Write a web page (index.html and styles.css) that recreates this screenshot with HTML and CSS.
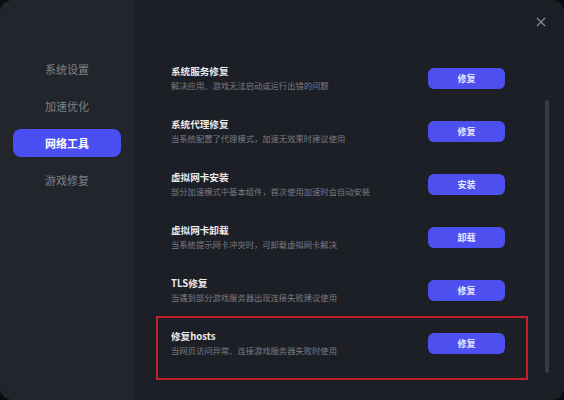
FILE: index.html
```html
<!DOCTYPE html>
<html lang="zh-CN">
<head>
<meta charset="utf-8">
<link rel="stylesheet" href="styles.css">
</head>
<body>
<div class="window">
  <aside class="sidebar">
    <div class="nav-item">系统设置</div>
    <div class="nav-item">加速优化</div>
    <div class="nav-item active">网络工具</div>
    <div class="nav-item">游戏修复</div>
  </aside>
  <main class="main">
    <button class="close" aria-label="关闭">
      <svg width="10" height="10" viewBox="0 0 10 10"><path d="M1 1L9 9M9 1L1 9" stroke="#8a8c93" stroke-width="1.2" fill="none"/></svg>
    </button>
    <div class="list">
      <div class="row">
        <div class="info"><div class="title">系统服务修复</div><div class="desc">解决应用、游戏无法启动或运行出错的问题</div></div>
        <button class="btn">修复</button>
      </div>
      <div class="row">
        <div class="info"><div class="title">系统代理修复</div><div class="desc">当系统配置了代理模式，加速无效果时建议使用</div></div>
        <button class="btn">修复</button>
      </div>
      <div class="row">
        <div class="info"><div class="title">虚拟网卡安装</div><div class="desc">部分加速模式中基本组件，首次使用加速时会自动安装</div></div>
        <button class="btn">安装</button>
      </div>
      <div class="row">
        <div class="info"><div class="title">虚拟网卡卸载</div><div class="desc">当系统提示网卡冲突时，可卸载虚拟网卡解决</div></div>
        <button class="btn">卸载</button>
      </div>
      <div class="row">
        <div class="info"><div class="title">TLS修复</div><div class="desc">当遇到部分游戏服务器出现连接失败建议使用</div></div>
        <button class="btn">修复</button>
      </div>
      <div class="row highlighted">
        <div class="info"><div class="title">修复hosts</div><div class="desc">当网页访问异常、连接游戏服务器失败时使用</div></div>
        <button class="btn">修复</button>
      </div>
    </div>
    <div class="scrollbar"></div>
  </main>
</div>
</body>
</html>
```

FILE: styles.css
```css
* { box-sizing: border-box; }
html, body { margin: 0; padding: 0; }
body {
  background: #0c0d10;
  width: 564px;
  height: 400px;
  overflow: hidden;
  font-family: "Noto Sans CJK SC", "Noto Sans", sans-serif;
}
.window {
  width: 564px;
  height: 400px;
  border-radius: 13px;
  overflow: hidden;
  display: flex;
  background: #1d1f26;
}
.sidebar {
  width: 135px;
  flex: none;
  background: #23252c;
  padding: 55px 0 0 13px;
  display: flex;
  flex-direction: column;
  gap: 9px;
}
.nav-item {
  width: 108px;
  height: 28px;
  line-height: 28px;
  text-align: center;
  font-size: 11px;
  color: #7f8189;
  border-radius: 8px;
}
.nav-item.active {
  background: #4b4ef0;
  color: #ffffff;
  font-weight: 700;
}
.main {
  flex: 1;
  position: relative;
  background: #1d1f26;
}
.close {
  position: absolute;
  top: 16px;
  left: 400px;
  width: 12px;
  height: 12px;
  padding: 0;
  border: 0;
  background: none;
  display: flex;
  align-items: center;
  justify-content: center;
}
.list {
  padding: 51px 0 0 36px;
  display: flex;
  flex-direction: column;
}
.row {
  position: relative;
  height: 53px;
  display: flex;
  align-items: center;
  width: 334px;
  justify-content: space-between;
}
.info { display: flex; flex-direction: column; }
.title {
  font-size: 9.6px;
  line-height: 14px;
  font-weight: 700;
  color: #ececee;
}
.desc {
  font-size: 8.3px;
  line-height: 14px;
  color: #7a7c84;
  white-space: nowrap;
}
.btn {
  width: 77px;
  height: 21px;
  border: 0;
  border-radius: 6px;
  background: #4d50ef;
  color: #e9e9ff;
  font-family: inherit;
  font-size: 9px;
  font-weight: 700;
  padding: 0;
  margin-top: 1px;
}
.highlighted::after {
  content: "";
  position: absolute;
  left: -15px;
  top: 0;
  width: 368px;
  height: 60px;
  border: 2px solid #c11f2b;
}
.scrollbar {
  position: absolute;
  left: 410px;
  top: 100px;
  width: 4px;
  height: 273px;
  border-radius: 2px;
  background: #393b44;
}
```
